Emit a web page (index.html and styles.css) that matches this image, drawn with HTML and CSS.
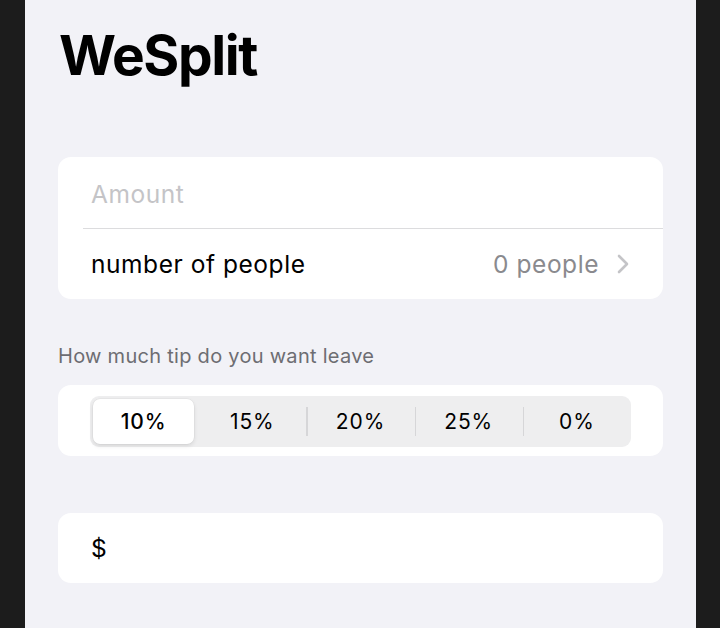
FILE: index.html
```html
<!DOCTYPE html>
<html lang="en">
<head>
<meta charset="utf-8">
<title>WeSplit</title>
<link rel="stylesheet" href="styles.css">
</head>
<body>
<div class="frame">
  <main class="screen">
    <h1 class="title">WeSplit</h1>

    <section class="card">
      <div class="row row-amount">
        <span class="placeholder">Amount</span>
      </div>
      <div class="separator"></div>
      <div class="row">
        <span class="label">number of people</span>
        <span class="value">0 people
          <svg class="chevron" width="12" height="20" viewBox="0 0 12 20"><polyline points="2,2 10,10 2,18" fill="none" stroke="#c4c4c7" stroke-width="2.6" stroke-linecap="round" stroke-linejoin="round"/></svg>
        </span>
      </div>
    </section>

    <h2 class="section-header">How much tip do you want leave</h2>

    <section class="card card-seg">
      <div class="segmented">
        <div class="seg selected">10%</div>
        <div class="seg">15%</div>
        <div class="seg divided">20%</div>
        <div class="seg divided">25%</div>
        <div class="seg divided">0%</div>
      </div>
    </section>

    <section class="card card-total">
      <div class="row">
        <span class="label">$</span>
      </div>
    </section>
  </main>
</div>
</body>
</html>
```

FILE: styles.css
```css
* { box-sizing: border-box; }
html, body { margin: 0; padding: 0; }
body {
  background: #1c1c1c;
  font-family: Inter, "Liberation Sans", sans-serif;
  width: 720px;
  height: 628px;
  overflow: hidden;
}
.frame {
  display: flex;
  padding: 0 24px 0 25px;
  height: 628px;
}
.screen {
  flex: 1;
  background: #f2f2f7;
  padding: 28px 33px 0 33px;
  display: flex;
  flex-direction: column;
}
.title {
  margin: 0;
  font-size: 55px;
  line-height: 55px;
  font-weight: 700;
  letter-spacing: -1.4px;
  color: #000;
  padding-left: 1px;
}
.card {
  background: #fff;
  border-radius: 13px;
}
.title + .card { margin-top: 74px; }
.row {
  height: 71px;
  display: flex;
  align-items: center;
  justify-content: space-between;
  padding: 0 34px 0 33px;
  font-size: 24.5px;
  letter-spacing: 0.55px;
}
.row-amount { padding-top: 3px; }
.row + .separator + .row { height: 70px; }
.separator {
  height: 1px;
  background: #dcdcde;
  margin-left: 25px;
}
.placeholder { color: #c4c4c7; }
.label { color: #000; }
.value {
  color: #8a8a8e;
  display: flex;
  align-items: center;
  gap: 18px;
}
.chevron { display: block; }
.section-header {
  margin: 45px 0 0 0;
  font-size: 20px;
  line-height: 24px;
  font-weight: 400;
  letter-spacing: 0.28px;
  color: #6d6d72;
}
.card-seg {
  margin-top: 17px;
  padding: 11px 32px 9px 32px;
}
.segmented {
  height: 51px;
  background: #eeeeef;
  border-radius: 9px;
  display: grid;
  grid-template-columns: repeat(5, 1fr);
}
.seg {
  position: relative;
  display: flex;
  align-items: center;
  justify-content: center;
  font-size: 21px;
  letter-spacing: 0.9px;
  color: #000;
}
.seg.selected {
  background: #fff;
  border-radius: 7px;
  margin: 3px 4px 3px 3px;
  font-weight: 500;
  box-shadow: 0 2px 4px rgba(0,0,0,0.10), 0 0 0 0.5px rgba(0,0,0,0.05);
}
.seg.divided::before {
  content: "";
  position: absolute;
  left: 0;
  top: 11px;
  bottom: 11px;
  width: 1.5px;
  background: #d6d6d8;
}
.card-total {
  margin-top: 57px;
}
.card-total .row { height: 70px; }
```
